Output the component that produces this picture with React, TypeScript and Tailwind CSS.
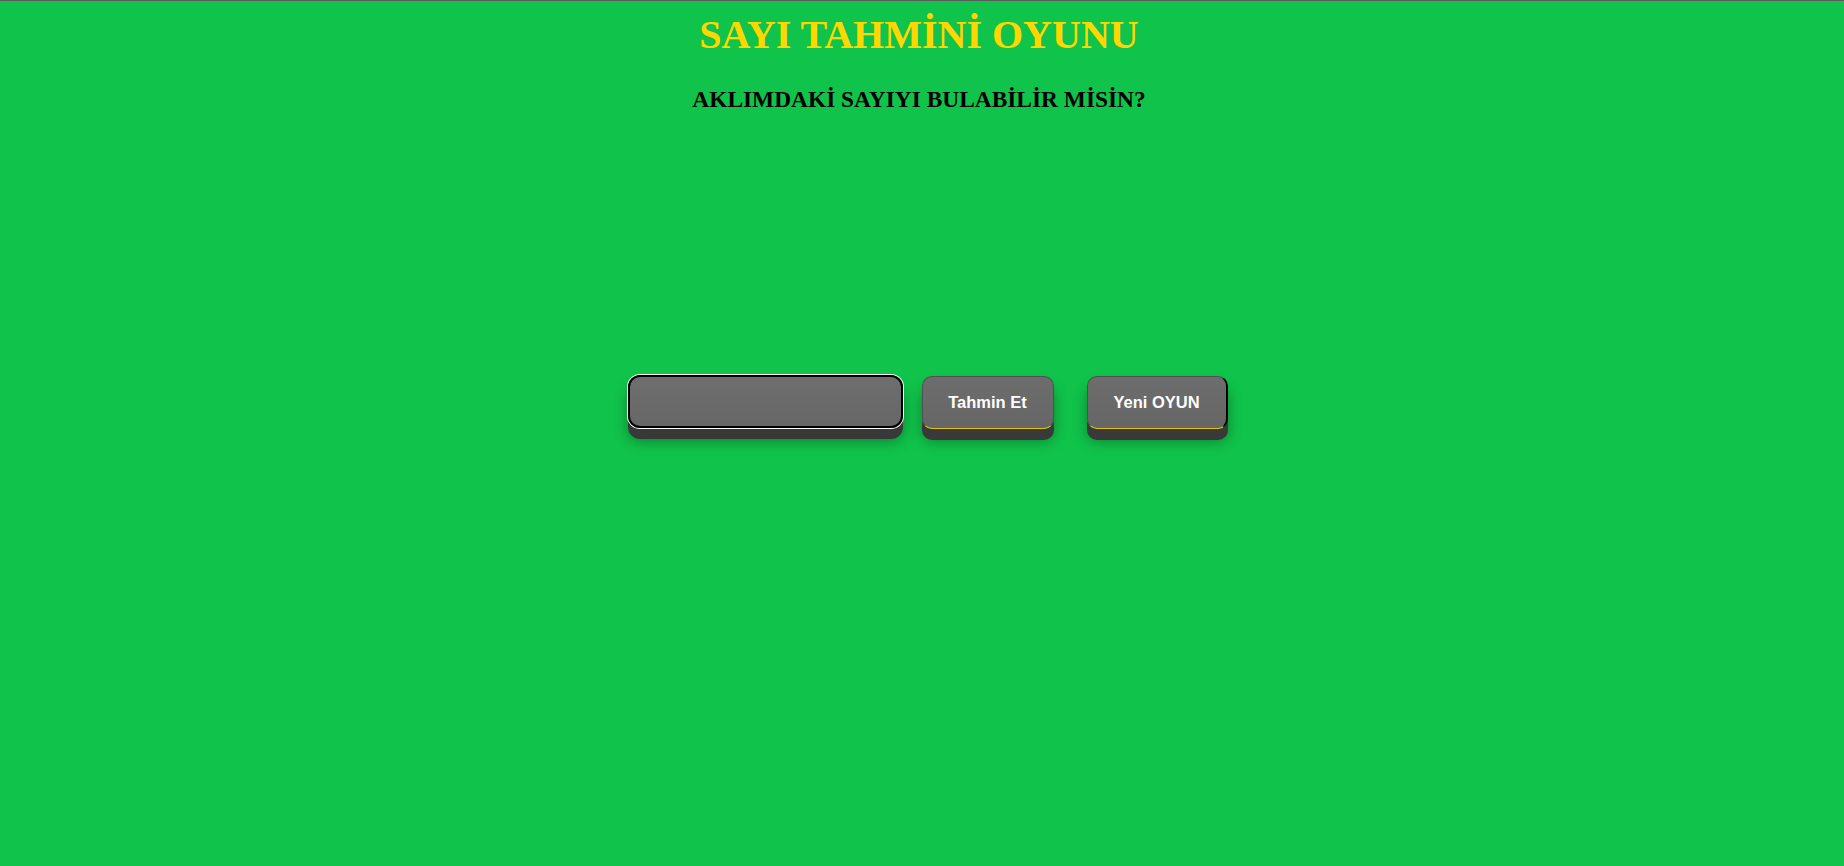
import React from "react";

const SLAB_BUTTON_CLASS =
  "h-[53px] rounded-[10px] border-t border-x border-b border-[#505050] border-b-[#e8c200] bg-gradient-to-b from-[#6d6d6d] to-[#666666] font-['Liberation_Sans',Arial,sans-serif] text-[16.5px] font-bold text-white shadow-[0_11px_0_#393939,0_12px_14px_rgba(0,0,0,0.35)]";

export default function App() {
  return (
    <div className="min-h-screen border-t border-[#5b5b5b] bg-[#10c34a] font-['Liberation_Serif','Times_New_Roman',serif]">
      <h1 className="pr-[6px] pt-[11px] text-center text-[40px] font-bold leading-[1.15] text-[#ffd700]">
        SAYI TAHMİNİ OYUNU
      </h1>
      <h3 className="mt-[28px] pr-[6px] text-center text-[23.4px] font-bold leading-[1.15] text-black">
        AKLIMDAKİ SAYIYI BULABİLİR MİSİN?
      </h3>

      <div className="mt-[262px] flex items-start justify-center pl-[11px]">
        <input
          type="text"
          aria-label="Tahmin"
          className="h-[53px] w-[275px] rounded-[12px] border-2 border-black bg-gradient-to-b from-[#6e6e6e] to-[#676767] px-3 text-white outline-none ring-1 ring-white shadow-[0_11px_0_#393939,0_13px_14px_rgba(0,0,0,0.35)]"
        />
        <button type="button" className={`ml-[19px] mt-[1px] w-[132px] ${SLAB_BUTTON_CLASS}`}>
          Tahmin Et
        </button>
        <button
          type="button"
          className={`ml-[33px] mt-[1px] w-[141px] border-r-2 border-r-black ${SLAB_BUTTON_CLASS}`}
        >
          Yeni OYUN
        </button>
      </div>
    </div>
  );
}
